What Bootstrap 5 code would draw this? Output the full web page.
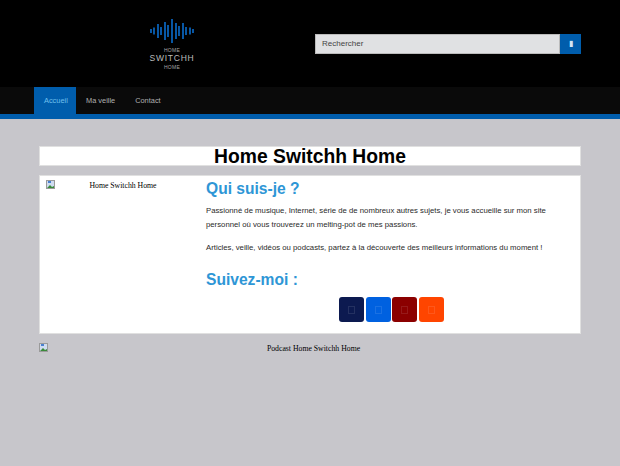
<!DOCTYPE html>
<html lang="fr">
<head>
  <meta charset="UTF-8">
  <title>Home Switchh Home</title>
  <meta name="viewport" content="width=device-width, initial-scale=1">
  <link href="https://cdn.jsdelivr.net/npm/bootstrap@5.3.0/dist/css/bootstrap.min.css" rel="stylesheet">
  <style>
    body { background: #c7c6cb; font-family: "Liberation Sans", Arial, sans-serif; font-size: 7.75px; color: #2a2a2a; }
    .site-top { background: #000; height: 87px; padding-left: 133px; padding-right: 39px; }
    .logo-box { width: 78px; padding-top: 18px; color: #a5a5a5; text-align: center; line-height: 1; }
    .logo-box svg { display: block; margin: 0 auto; }
    .logo-small { font-size: 5px; letter-spacing: .3px; margin-top: 4px; }
    .logo-big { font-size: 8.5px; letter-spacing: .75px; color: #bbb; margin-top: 1px; }
    .logo-last { margin-top: 2px; }
    .search-box { width: 266px; height: 20px; margin-top: 34px; }
    .search-input { width: 245px; background: #e0e1e3; border: 1px solid #bbb; color: #444; padding-left: 6px; line-height: 18px; font-size: 8px; }
    .search-btn { width: 21px; background: #005dac; color: #d5e6f6; font-size: 8px; line-height: 20px; text-align: center; }
    .main-menu { background: #0a0a0a; height: 32px; border-bottom: 5px solid #005dac; padding-left: 34px; }
    .main-menu a { display: block; height: 27px; padding: 0 10px; line-height: 28px; font-size: 7.4px; color: #b0b0b0; text-decoration: none; }
    .main-menu a.current { background: #005dac; color: #6fc0ee; width: 42px; }
    .page-wrap { padding: 27px 39px 0; }
    .title-box { background: #fff; border: 1px solid #e0e0e0; height: 20px; margin-bottom: 9px; }
    .title-box h1 { font-size: 19.3px; font-weight: bold; color: #000; line-height: 19px; margin: 0; text-align: center; }
    .intro-box { background: #fff; border: 1px solid #e0e0e0; height: 159px; margin-bottom: 9px; }
    .intro-pic { width: 166px; padding: 4px 0 0 6px; }
    .alt-text { font-family: "Liberation Serif", "Times New Roman", serif; font-size: 7.75px; color: #000; }
    .pic-label { padding: 0 15px 0 0; line-height: 12px; }
    .intro-text { padding-top: 3px; width: 374px; }
    .intro-text h2 { color: #2e96d6; font-size: 15.6px; font-weight: bold; line-height: 20px; margin: 0 0 5px; }
    .intro-text p { line-height: 14px; margin: 0 0 8px; }
    .intro-text p + p { margin-top: 9px; }
    .intro-text h2.follow { margin: 15px 0 7px; }
    .social-row { padding-left: 133px; column-gap: 1.5px; }
    .social-btn { width: 25px; height: 25px; border-radius: 3px; display: flex; align-items: center; justify-content: center; }
    .social-btn span { display: block; width: 7px; height: 8px; border: 1px solid rgba(255,255,255,.1); }
    .soc-navy { background: #0c1a50; }
    .soc-blue { background: #0061e0; }
    .soc-red { background: #8b0000; }
    .soc-orange { background: #ff4500; }
    .podcast-line { height: 20px; }
    .podcast-text { width: 542px; text-align: center; margin-left: -9px; line-height: 12px; padding-left: 7px; }
  </style>
</head>
<body>
  <!-- header -->
  <div class="site-top d-flex justify-content-between">
    <div class="logo-box">
      <svg width="44" height="26" viewBox="0 0 44 26">
        <g stroke="#0a66c0" stroke-width="1.7">
          <path d="M1 11v4M4 9.500v7M8 6v14M11 9v8M15 4v18M18 7v12M22 1v24M26 5v16M29 8v10M33 5v16M36 9v8M40 9.500v7M43 11v4"/>
        </g>
      </svg>
      <div class="logo-small">HOME</div>
      <div class="logo-big">SWITCHH</div>
      <div class="logo-small logo-last">HOME</div>
    </div>
    <div class="search-box d-flex">
      <div class="search-input">Rechercher</div>
      <div class="search-btn">&#9646;</div>
    </div>
  </div>

  <!-- menu -->
  <div class="main-menu d-flex">
    <a class="current" href="#">Accueil</a>
    <a href="#">Ma veille</a>
    <a href="#">Contact</a>
  </div>

  <div class="page-wrap">
    <div class="title-box"><h1>Home Switchh Home</h1></div>

    <div class="intro-box d-flex">
      <div class="intro-pic d-flex">
        <svg width="9" height="9" viewBox="0 0 9 9" class="flex-shrink-0">
          <rect x=".5" y=".5" width="8" height="8" fill="#cfdcf0" stroke="#9a9a9a"/>
          <path d="M1 8l3-3 2 2 2-1v2z" fill="#3a8a3a"/>
          <path d="M2 1h3v2H2z" fill="#4a80d0"/>
        </svg>
        <div class="alt-text pic-label flex-grow-1 text-center">Home Switchh Home</div>
      </div>
      <div class="intro-text">
        <h2>Qui suis-je ?</h2>
        <p>Passionné de musique, Internet, série de de nombreux autres sujets, je vous accueille sur mon site personnel où vous trouverez un melting-pot de mes passions.</p>
        <p>Articles, veille, vidéos ou podcasts, partez à la découverte des meilleurs informations du moment !</p>
        <h2 class="follow">Suivez-moi :</h2>
        <div class="social-row d-flex">
          <div class="social-btn soc-navy"><span></span></div>
          <div class="social-btn soc-blue"><span></span></div>
          <div class="social-btn soc-red"><span></span></div>
          <div class="social-btn soc-orange"><span></span></div>
        </div>
      </div>
    </div>

    <div class="podcast-line d-flex">
      <svg width="9" height="9" viewBox="0 0 9 9" class="flex-shrink-0">
        <rect x=".5" y=".5" width="8" height="8" fill="#cfdcf0" stroke="#9a9a9a"/>
        <path d="M1 8l3-3 2 2 2-1v2z" fill="#3a8a3a"/>
        <path d="M2 1h3v2H2z" fill="#4a80d0"/>
      </svg>
      <div class="podcast-text alt-text">Podcast Home Switchh Home</div>
    </div>
  </div>

  <script src="https://cdn.jsdelivr.net/npm/bootstrap@5.3.0/dist/js/bootstrap.bundle.min.js"></script>
</body>
</html>
